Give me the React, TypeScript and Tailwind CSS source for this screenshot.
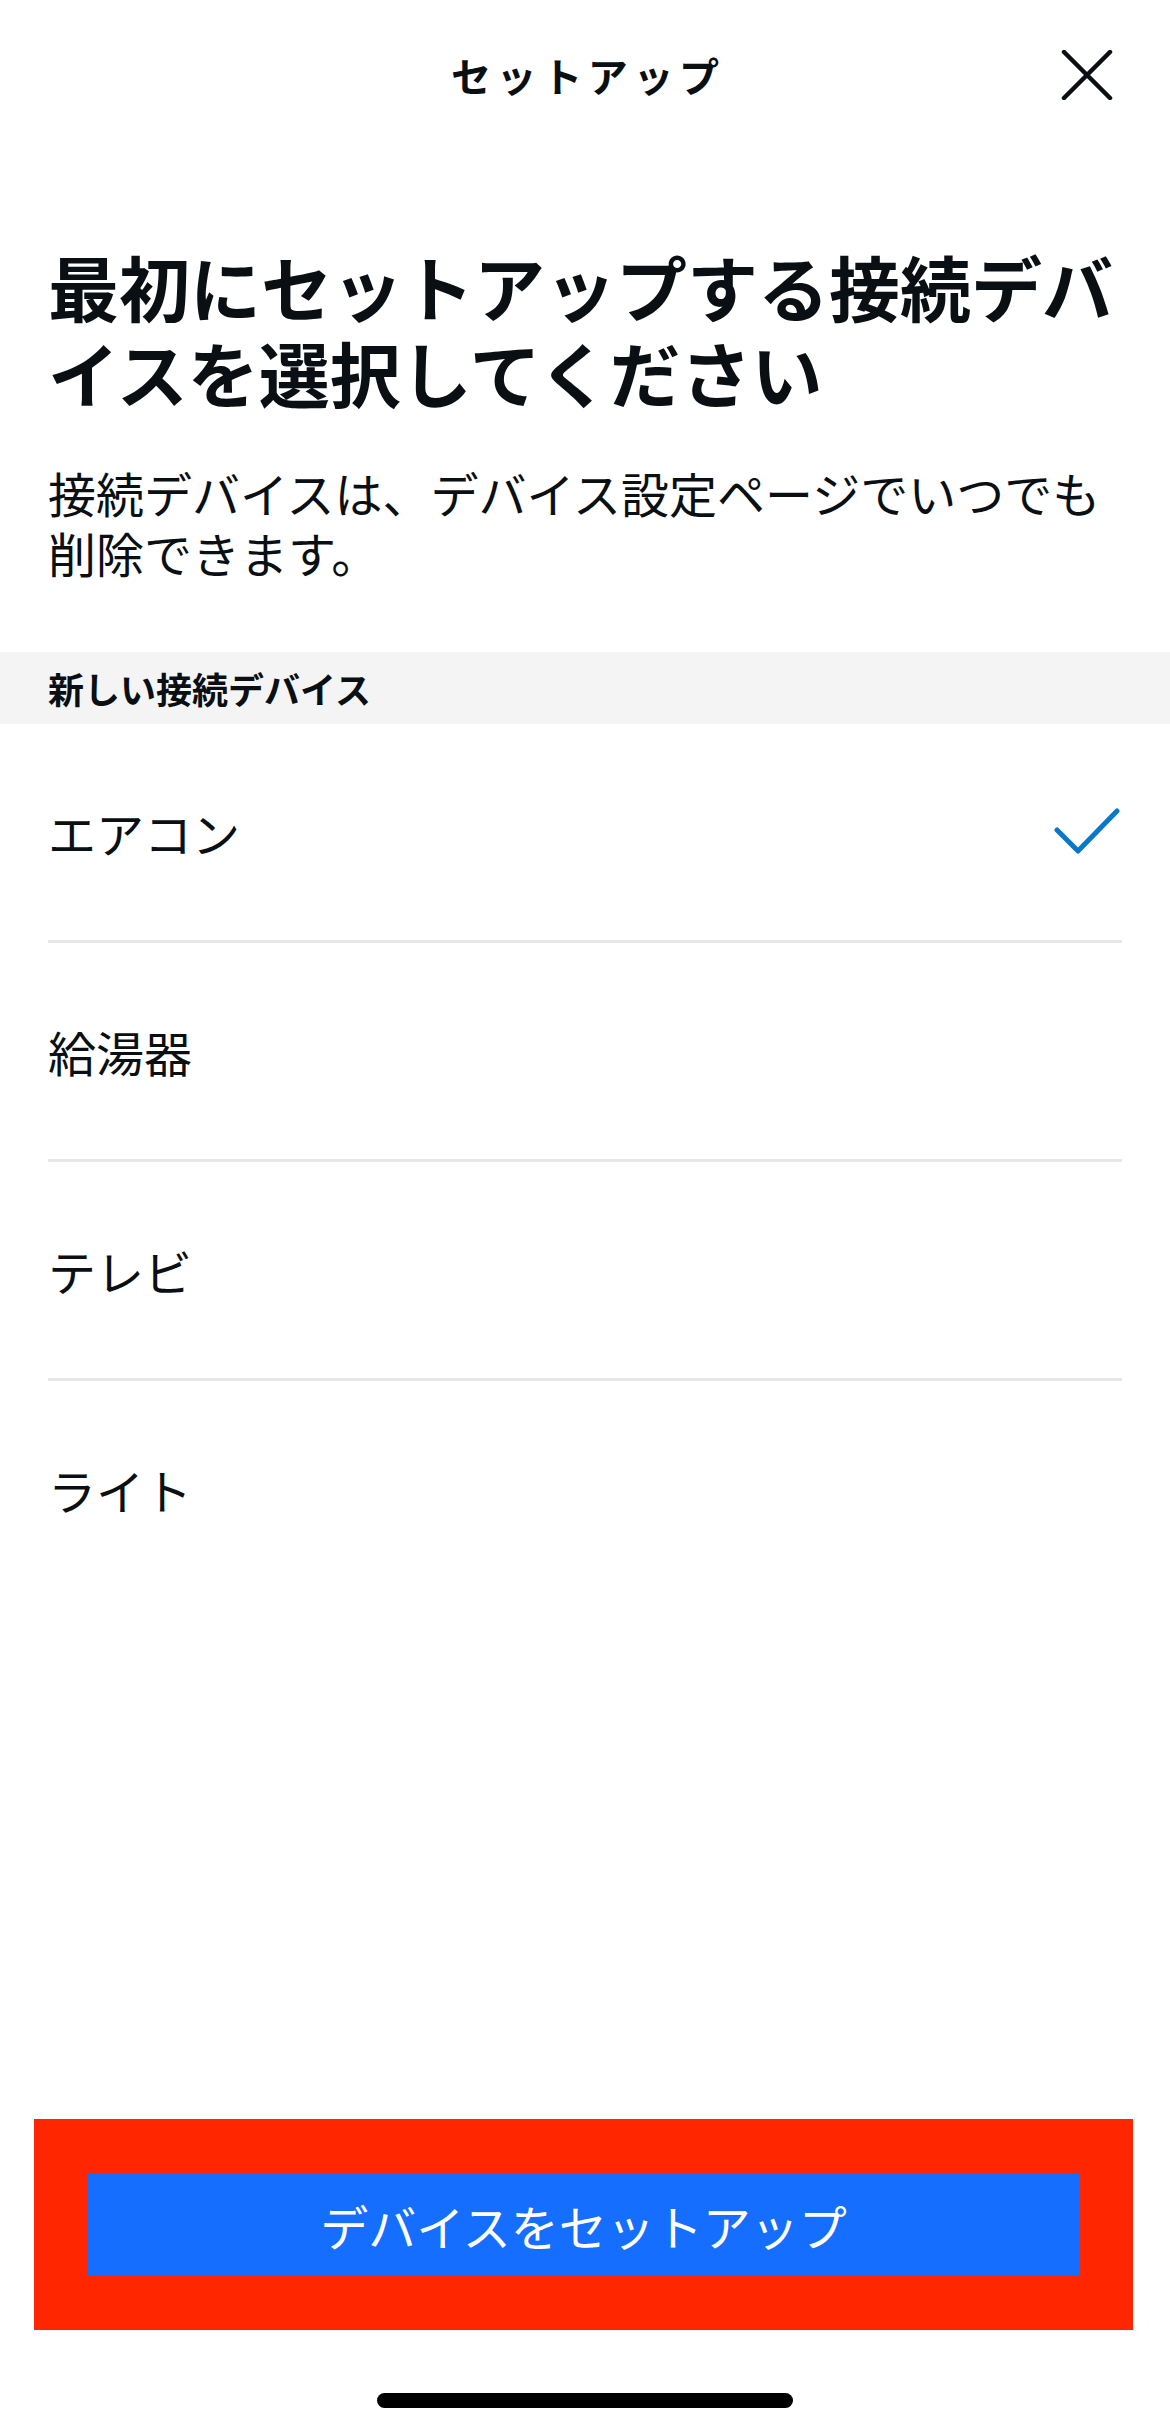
const devices = [
  { name: 'エアコン', selected: true },
  { name: '給湯器', selected: false },
  { name: 'テレビ', selected: false },
  { name: 'ライト', selected: false },
];

const font = { fontFamily: '"Noto Sans CJK JP", "Noto Sans", sans-serif' };

const CheckIcon = () => (
  <svg width="66" height="50" viewBox="0 0 66 50" fill="none" className="mr-[2px]">
    <path d="M3 23 L24 44 L63 4" stroke="#0a78c8" strokeWidth="5" strokeLinecap="round" strokeLinejoin="round" />
  </svg>
);

const CloseIcon = () => (
  <svg width="52" height="50" viewBox="0 0 52 50" fill="none">
    <path d="M3 2 L49 48 M49 2 L3 48" stroke="#0a0f14" strokeWidth="4.5" strokeLinecap="round" />
  </svg>
);

const DeviceRow = ({ name, selected }: { name: string; selected: boolean }) => (
  <div className="flex h-[216px] items-center justify-between px-[48px]">
    <span className="text-[48px] text-[#0a0f14]">{name}</span>
    {selected && <CheckIcon />}
  </div>
);

export default function App() {
  return (
    <div className="flex min-h-[2433px] w-[1170px] flex-col bg-white" style={font}>
      {/* Header */}
      <div className="grid h-[150px] grid-cols-[1fr_auto_1fr] items-center">
        <div />
        <h1 className="pl-[0.14em] text-[40px] font-bold tracking-[0.14em] text-[#0a0f14]">セットアップ</h1>
        <div className="flex justify-end pr-[57px]">
          <CloseIcon />
        </div>
      </div>

      <h2 className="mt-[92px] px-[48px] text-[71px] font-bold leading-[86px] text-[#0a0f14]">
        最初にセットアップする接続デバイスを選択してください
      </h2>
      <p className="mt-[48px] px-[48px] text-[48px] leading-[60px] text-[#0a0f14]">
        接続デバイスは、デバイス設定ページでいつでも削除できます。
      </p>

      {/* Section */}
      <div className="mt-[70px] flex h-[72px] items-center bg-[#f4f4f4] px-[48px]">
        <span className="text-[36px] font-bold text-[#0a0f14]">新しい接続デバイス</span>
      </div>

      <div className="flex flex-col">
        {devices.map((d, i) => (
          <div key={d.name}>
            {i > 0 && <div className="mx-[48px] h-[3px] bg-[#e6e7e8]" />}
            <DeviceRow name={d.name} selected={d.selected} />
          </div>
        ))}
      </div>

      <div className="flex-1" />

      {/* Bottom action */}
      <div className="ml-[34px] mr-[37px] bg-[#ff2600] px-[53px] py-[54px]">
        <button className="flex h-[103px] w-full items-center justify-center bg-[#166efe] text-[48px] text-white">
          デバイスをセットアップ
        </button>
      </div>

      <div className="flex h-[103px] items-end justify-center pb-[25px]">
        <div className="h-[15px] w-[416px] rounded-full bg-black" />
      </div>
    </div>
  );
}
